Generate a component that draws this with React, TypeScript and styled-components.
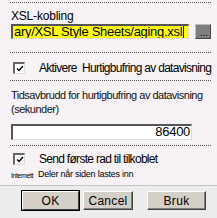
import styled, { createGlobalStyle } from "styled-components";

const Global = createGlobalStyle`
body{
  margin:0;
  background:#f7f2f6;
  font-family:"Liberation Sans", Arial, sans-serif;
  color:#000;
}
`;

const Panel = styled.div`
width:217px;
height:218px;
overflow:hidden;
display:flex;
flex-direction:column;
white-space:nowrap;
`;

const Section = styled.div<{h:number; pad?:string}>`
box-sizing:border-box;
height:${(p)=>p.h}px;
flex-shrink:0;
margin: 0 6px 0 10px;
border-top:1px dotted #555;
padding:${(p)=>p.pad || "0"};
`;

const Label = styled.div`
font-size:12px;
line-height:14px;
letter-spacing:-0.2px;
padding-left:1px;
`;

const SmallLabel = styled.div`
font-size:11px;
line-height:14px;
letter-spacing:-0.5px;
padding-left:1px;
color:#111;
`;

const Row = styled.div`
display:flex;
align-items:center;
gap:6px;
`;

const TextBox = styled.div<{bg?:string; align?:string; h?:number}>`
box-sizing:border-box;
height:${(p)=>p.h || 15}px;
width:181px;
margin-left:1px;
background:${(p)=>p.bg || "#fff"};
border-top:2px solid #555;
border-left:2px solid #555;
border-right:1px solid #ddd;
border-bottom:1px solid #ddd;
font-size:13px;
line-height:12px;
letter-spacing:-0.3px;
overflow:hidden;
text-align:${(p)=>p.align || "left"};
padding:0 1px;
`;

const Caret = styled.span`
display:inline-block;
width:1px;
height:12px;
background:#000;
vertical-align:top;
margin-left:1px;
`;

const BrowseBtn = styled.div`
box-sizing:border-box;
width:16px;
height:15px;
background:#7f7f7f;
border:1px solid #444;
border-top-color:#bbb;
border-left-color:#bbb;
font-size:10px;
color:#000;
display:flex;
justify-content:flex-end;
align-items:flex-end;
padding:0 2px 1px 0;
line-height:8px;
`;

const CheckRow = styled.label`
display:flex;
align-items:center;
gap:14px;
padding-left:3px;
font-size:12px;
letter-spacing:-0.7px;
`;

const Box = styled.span`
box-sizing:border-box;
width:12px;
height:12px;
background:#fff;
border-top:2px solid #666;
border-left:2px solid #666;
border-right:1px solid #ddd;
border-bottom:1px solid #ddd;
display:flex;
align-items:center;
justify-content:center;
flex-shrink:0;
`;

const Note = styled.div`
display:flex;
align-items:flex-end;
gap:5px;
font-size:9px;
letter-spacing:-0.25px;
margin:2px 0 0 11px;
`;

const Tiny = styled.span`
font-size:7px;
letter-spacing:-0.4px;
`;

const Footer = styled.div`
margin-top:auto;
height:33px;
flex-shrink:0;
background:#ececec;
border-top:1px solid #c4c4c4;
display:flex;
align-items:flex-start;
padding:5px 0 0 22px;
box-sizing:border-box;
`;

const Button = styled.div<{w:number; primary?:boolean; ml?:number}>`
box-sizing:border-box;
width:${(p)=>p.w}px;
height:19px;
margin-left:${(p)=>p.ml || 0}px;
background:#d4d0c8;
font-size:12px;
display:flex;
align-items:center;
justify-content:center;
border:1px solid;
border-color:#fff #404040 #404040 #fff;
box-shadow:${(p)=>p.primary ? "0 0 0 1px #000" : "inset -1px -1px 0 #808080"};
letter-spacing:0.3px;
`;

function Check(){
  return (
    <Box>
      <svg width="8" height="7" viewBox="0 0 8 7">
        <path d="M1 3.5 L3 5.5 L7 1" stroke="#000" strokeWidth="1.4" fill="none"/>
      </svg>
    </Box>
  );
}

export default function App(){
  return (
    <Panel>
      <Global/>
      <Section h={50} pad="6px 0 0" style={{marginTop:2}}>
        <Label>XSL-kobling</Label>
        <Row style={{marginTop:1}}>
          <TextBox bg="#ffff00">ary/XSL Style Sheets/aging.xsl<Caret/></TextBox>
          <BrowseBtn>...</BrowseBtn>
        </Row>
      </Section>
      <Section h={28} pad="8px 0 0">
        <CheckRow><Check/>Aktivere&nbsp; Hurtigbufring av datavisning</CheckRow>
      </Section>
      <Section h={65} pad="7px 0 0">
        <SmallLabel>Tidsavbrudd for hurtigbufring av datavisning</SmallLabel>
        <SmallLabel>(sekunder)</SmallLabel>
        <TextBox align="right" h={16} style={{marginTop:8}}>86400</TextBox>
      </Section>
      <Section h={22} pad="6px 0 0">
        <CheckRow><Check/>Send første rad til tilkoblet</CheckRow>
      </Section>
      <Note><Tiny>Intemett</Tiny>Deler når siden lastes inn</Note>
      <Footer>
        <Button w={57} primary>OK</Button>
        <Button w={50} ml={4}>Cancel</Button>
        <Button w={59} ml={14}>Bruk</Button>
      </Footer>
    </Panel>
  );
}
